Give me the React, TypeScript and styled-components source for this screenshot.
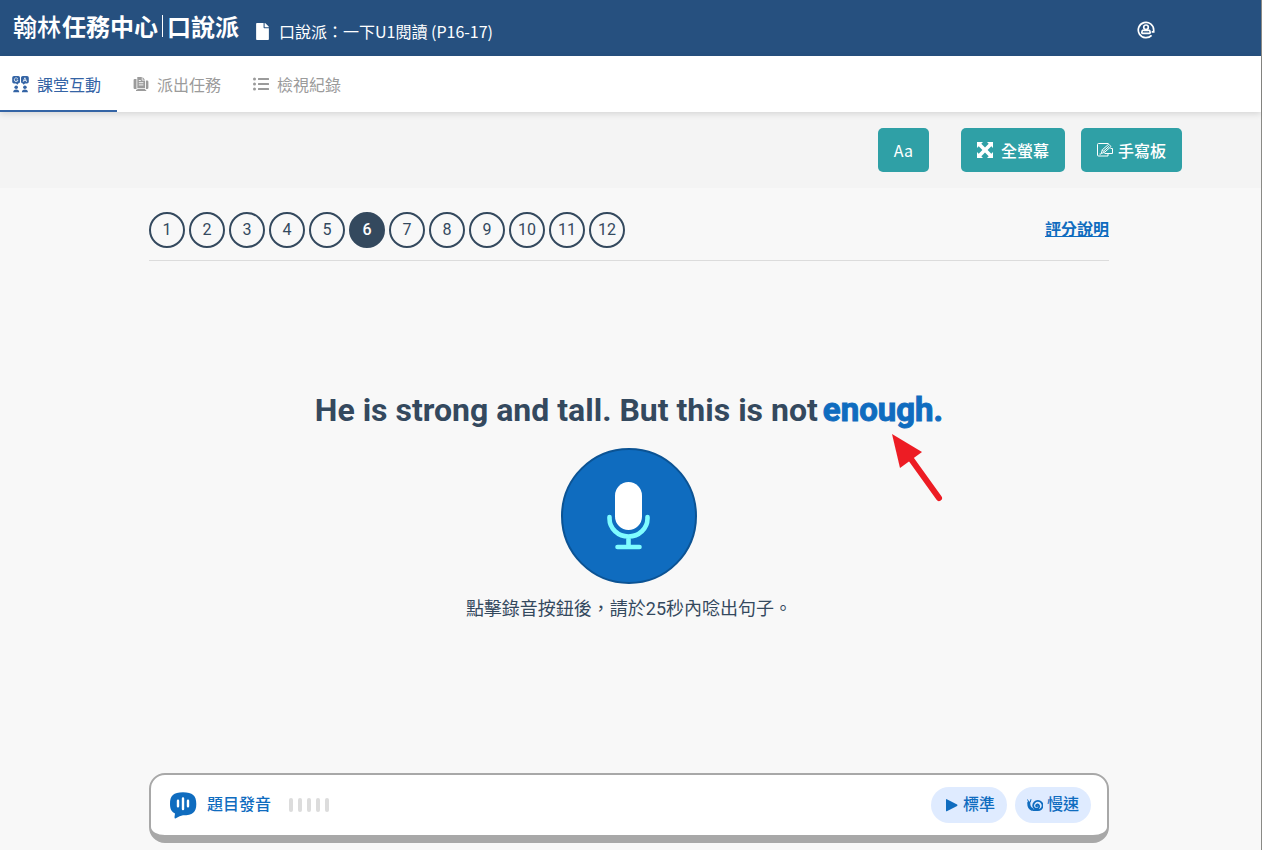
import React, { useState } from "react";
import styled, { createGlobalStyle } from "styled-components";
import { FaFile, FaListUl } from "react-icons/fa";

const sans = `Roboto, "Noto Sans CJK TC", sans-serif`;
const cjk = `"Noto Sans CJK TC", "Noto Sans", sans-serif`;

const GlobalStyle = createGlobalStyle`
  *, *::before, *::after { box-sizing: border-box; }
  body { margin: 0; background: #f8f8f8; font-family: ${sans}; color: #34495e; }
  button { font: inherit; color: inherit; border: 0; padding: 0; margin: 0; background: none; cursor: pointer; }
  a { color: inherit; }
  svg { display: block; flex: none; }
`;

const Page = styled.div`
  min-height: 100vh;
  display: flex;
  flex-direction: column;
  border-right: 1px solid #8a8a86;
`;

const Header = styled.header`
  display: flex;
  align-items: center;
  height: 56px;
  padding: 0 106px 0 13px;
  background: #26507f;
  color: #fff;
  font-family: ${cjk};
`;

const Brand = styled.a`
  display: flex;
  align-items: center;
  padding-bottom: 4px;
  font-size: 24px;
  line-height: 32px;
  font-weight: 700;
  text-decoration: none;
  white-space: nowrap;
`;

const BrandMark = styled.span`
  font-weight: 500;
  padding-right: 1px;
`;

const BrandRule = styled.span`
  width: 1px;
  height: 22px;
  margin: 0 4px;
  background: #fff;
`;

const LessonTitle = styled.h1`
  display: flex;
  align-items: center;
  gap: 8px;
  margin: 0 auto 0 15px;
  padding-top: 6px;
  font-size: 16px;
  line-height: 24px;
  font-weight: 400;
  white-space: nowrap;
`;

const AccountButton = styled.button`
  padding-top: 4px;
`;

const Tabs = styled.nav`
  display: flex;
  height: 56px;
  background: #fff;
  box-shadow: 0 2px 6px rgba(0, 0, 0, 0.12);
  z-index: 1;
`;

const Tab = styled.a<{ $active?: boolean }>`
  display: flex;
  align-items: center;
  gap: 8px;
  padding: 2px 16px 0 12px;
  margin-right: 4px;
  border-bottom: 2px solid ${(p) => (p.$active ? "#3464a5" : "transparent")};
  color: ${(p) => (p.$active ? "#3464a5" : "#9b9b9b")};
  font-family: ${cjk};
  font-size: 16px;
  line-height: 24px;
  text-decoration: none;
`;

const Toolbar = styled.div`
  display: flex;
  justify-content: flex-end;
  gap: 16px;
  padding: 16px 79px 16px 16px;
  background: #f4f4f4;
`;

const ToolButton = styled.button<{ $apart?: boolean; $tight?: boolean }>`
  display: flex;
  align-items: center;
  gap: ${(p) => (p.$tight ? "4px" : "8px")};
  height: 44px;
  padding: 0 16px;
  margin-right: ${(p) => (p.$apart ? "16px" : "0")};
  border-radius: 5px;
  background: #2fa0a6;
  color: #fff;
  font-family: ${cjk};
  font-size: 16px;
  font-weight: ${(p) => (p.$apart ? 400 : 500)};
  line-height: 24px;
`;

const Main = styled.main`
  flex: 1;
  display: flex;
  flex-direction: column;
  width: 100%;
  max-width: 995px;
  margin: 0 auto;
  padding: 24px 19px 7px 16px;
`;

const QuestionBar = styled.div`
  display: flex;
  align-items: center;
  justify-content: space-between;
  padding-bottom: 12px;
  border-bottom: 1px solid #dcdcdc;
`;

const QuestionList = styled.div`
  display: flex;
  gap: 4px;
`;

const QuestionButton = styled.button<{ $active: boolean }>`
  width: 36px;
  height: 36px;
  border: 2px solid #34495e;
  border-radius: 50%;
  background: ${(p) => (p.$active ? "#34495e" : "transparent")};
  color: ${(p) => (p.$active ? "#fff" : "#34495e")};
  font-size: 16px;
  line-height: 32px;
  font-weight: ${(p) => (p.$active ? 500 : 400)};
`;

const ScoreLink = styled.a`
  color: #0f6cbf;
  font-size: 16px;
  line-height: 24px;
  font-weight: 700;
`;

const Practice = styled.section`
  flex: 1;
  display: flex;
  flex-direction: column;
  align-items: center;
  justify-content: center;
  padding-bottom: 26px;
`;

const Sentence = styled.p`
  margin: 0;
  font-size: 32px;
  line-height: 48px;
  font-weight: 700;
  white-space: nowrap;
`;

const Emphasis = styled.span`
  position: relative;
  margin-left: 5px;
  color: #0f6cbf;
  font-size: 33px;
  -webkit-text-stroke: 1px #0f6cbf;
`;

const Pointer = styled.svg`
  position: absolute;
  right: 0;
  top: 43px;
`;

const RecordButton = styled.button`
  display: grid;
  place-items: center;
  width: 136px;
  height: 136px;
  margin: 14px 0 11px;
  border: 2px solid #0b5394;
  border-radius: 50%;
  background: #0f6cbf;
`;

const Hint = styled.p`
  margin: 0;
  font-size: 18px;
  line-height: 28px;
`;

const Player = styled.section`
  display: flex;
  align-items: center;
  height: 70px;
  padding: 0 16px 0 18px;
  border: 2px solid #a8a8a8;
  border-bottom-width: 8px;
  border-radius: 16px;
  background: #fff;
  color: #0f6cbf;
  font-size: 16px;
  line-height: 24px;
`;

const PlayerTitle = styled.span`
  margin: 0 18px 0 10px;
  font-weight: 500;
`;

const Level = styled.div`
  display: flex;
  gap: 5px;
  margin-right: auto;
`;

const LevelBar = styled.span`
  width: 4px;
  height: 14px;
  border-radius: 2px;
  background: #dcdcdc;
`;

const SpeedButton = styled.button`
  display: flex;
  align-items: center;
  gap: 4px;
  height: 36px;
  margin-left: 8px;
  padding: 0 12px;
  border-radius: 18px;
  background: #dfebff;
  font-weight: 500;
`;

function AccountIcon() {
  return (
    <svg width="18" height="18" viewBox="0 0 18 18" fill="none" stroke="#fff" strokeWidth="1.7">
      <path d="M14.600 14.300A7.700 7.700 0 1 1 16.700 9v1.800h-2" />
      <circle cx="9" cy="6.300" r="2.300" />
      <path d="M6.600 8.700C5.200 9.200 4.800 10 4.800 11.500q0 .8.800.8h6.800q.8 0 .8-.8c0-1.500-.4-2.300-1.800-2.800M6.500 9.500h5" />
    </svg>
  );
}

function QaIcon() {
  return (
    <svg width="17" height="18" viewBox="0 0 17 18" fill="currentColor">
      <path d="M2 1h4.200Q8 1 8 2.800v3.900Q8 8.500 6.200 8.500L5.400 9.800 4 8.500H2Q.2 8.500.2 6.700V2.800Q.2 1 2 1zM10.800 1H15q1.800 0 1.800 1.800v3.900q0 1.800-1.800 1.800h-2l-1.400 1.300-.8-1.300Q9 8.500 9 6.700V2.800Q9 1 10.800 1z" />
      <path d="M5.800 3.600Q4.700 2.600 3.400 3q-1.200.5-1.100 1.900.2 1.700 1.900 1.700 1.500 0 1.700-1.500H4.500M11.100 6.900l1.800-4.200 1.800 4.200M11.800 5.600H14" fill="none" stroke="#fff" strokeWidth=".8" />
      <circle cx="4.200" cy="12.300" r="1.800" />
      <circle cx="12.900" cy="12.300" r="1.800" />
      <path d="M1.200 17.200q0-2.600 3-2.600t3 2.600zM9.900 17.200q0-2.600 3-2.600t3 2.600z" />
    </svg>
  );
}

function AssignIcon() {
  return (
    <svg width="16" height="16" viewBox="0 0 16 16" fill="currentColor">
      <path d="M1.700 3H3.500v10H1.700Q.6 13 .6 11.900V4.100Q.6 3 1.700 3zM12.900 4.500h1.200q1.300 0 1.300 1.200v6.100q0 1.200-1.300 1.200h-1.200z" />
      <path d="M4.300 1h4.500v3.500H12V12H4.300zM9.500 1L12 3.800H9.500zM4.300 12.700H12v1.100h1.200V15H3v-1.200h1.300z" />
      <path d="M5.800 4.500h2M5.800 6.700h4.600M5.800 8.900h4.600" stroke="#fff" strokeWidth=".9" />
    </svg>
  );
}

function ExpandIcon() {
  return (
    <svg width="16" height="16" viewBox="0 0 16 16" fill="#fff">
      <path d="M0 0h6L4.300 1.700 8 5.400l3.700-3.700L10 0h6v6l-1.700-1.700L10.600 8l3.700 3.700L16 10v6h-6l1.700-1.700L8 10.600l-3.700 3.700L6 16H0v-6l1.700 1.700L5.400 8 1.700 4.300 0 6z" />
    </svg>
  );
}

function TabletIcon() {
  return (
    <svg width="17" height="16" viewBox="0 0 17 16" fill="none" stroke="#fff" strokeWidth="1" strokeLinejoin="round">
      <path d="M11.500 1.500h-10Q.5 1.500.5 2.500v10.500Q.5 14 1.500 14H11v-2.500M2.500 12h1.500M13.500 6.500H15.500v5H7.500" />
      <path d="M4.300 11.500l1-3.700 6.400-5.600 2.300 2.300-6.400 5.800zM5.300 7.800l2.300 2.500M7 8.700l5-4.400" />
    </svg>
  );
}

function MicIcon() {
  return (
    <svg width="44" height="70" viewBox="0 0 44 70">
      <rect x="8" y="1" width="27" height="48" rx="13.500" fill="#fff" />
      <path d="M2.500 36v1.500a19 18 0 0 0 38 0V36M21.500 56v10M10.500 66h22" fill="none" stroke="#7ffcff" strokeWidth="4.600" strokeLinecap="round" />
    </svg>
  );
}

function VoiceIcon() {
  return (
    <svg width="28" height="28" viewBox="0 0 28 28">
      <path d="M14 1.200C23.500 1.200 27.300 4.500 27.300 13S23.500 24.300 14 24.300q-3 .3-7.600 3.200Q5.400 27.600 5.500 26L6 22.500C2.500 20.800 1 18 1 13 1 4.500 4.500 1.200 14 1.200z" fill="#0f6cbf" />
      <path d="M9 9.800v5.500M14 7.500v10.500M19 9.800v5.500" stroke="#fff" strokeWidth="2.400" strokeLinecap="round" />
    </svg>
  );
}

function PlayIcon() {
  return (
    <svg width="16" height="16" viewBox="0 0 16 16">
      <path d="M3 2.600v11.200q0 .8.800.4l10.300-5.300q.8-.6 0-1.300L3.800 2.200Q3 1.800 3 2.600z" fill="#0f6cbf" />
    </svg>
  );
}

function SnailIcon() {
  return (
    <svg width="16" height="16" viewBox="0 0 16 16" fill="none" stroke="#0f6cbf" strokeLinecap="round">
      <path d="M.6 2.800l1.200 2M3.900 2.600L3.300 5" strokeWidth="1" />
      <path d="M1.800 5.700c-.2 3.500.6 5.600 3.200 6.600" strokeWidth="3" />
      <path d="M6.500 13.200h4a4.700 4.700 0 1 0-4.300-4.500c0 2.900 3.400 4 5 2.700 1.900-1.700.6-4.400-1.300-3.800-1.200.4-1 1.900.1 1.900" strokeWidth="1.800" />
    </svg>
  );
}

export default function App() {
  const [question, setQuestion] = useState(6);
  return (
    <Page>
      <GlobalStyle />
      <Header>
        <Brand href="#home">
          <BrandMark>翰林</BrandMark>
          任務中心
          <BrandRule />
          口說派
        </Brand>
        <LessonTitle>
          <FaFile size={17} />
          口說派：一下U1閱讀 (P16-17)
        </LessonTitle>
        <AccountButton aria-label="帳號">
          <AccountIcon />
        </AccountButton>
      </Header>
      <Tabs>
        <Tab href="#class" $active>
          <QaIcon />
          課堂互動
        </Tab>
        <Tab href="#assign">
          <AssignIcon />
          派出任務
        </Tab>
        <Tab href="#records">
          <FaListUl size={16} />
          檢視紀錄
        </Tab>
      </Tabs>
      <Toolbar>
        <ToolButton $apart>Aa</ToolButton>
        <ToolButton>
          <ExpandIcon />
          全螢幕
        </ToolButton>
        <ToolButton $tight>
          <TabletIcon />
          手寫板
        </ToolButton>
      </Toolbar>
      <Main>
        <QuestionBar>
          <QuestionList>
            {Array.from({ length: 12 }, (_, i) => i + 1).map((n) => (
              <QuestionButton key={n} $active={n === question} onClick={() => setQuestion(n)}>
                {n}
              </QuestionButton>
            ))}
          </QuestionList>
          <ScoreLink href="#score">評分說明</ScoreLink>
        </QuestionBar>
        <Practice>
          <Sentence>
            He is strong and tall. But this is not
            <Emphasis>
              enough.
              <Pointer width="52" height="70" viewBox="0 0 52 70">
                <path d="M20 26L48 65" stroke="#ed1c24" strokeWidth="6" strokeLinecap="round" />
                <path d="M1 1L31 19L9 35z" fill="#ed1c24" />
              </Pointer>
            </Emphasis>
          </Sentence>
          <RecordButton aria-label="錄音">
            <MicIcon />
          </RecordButton>
          <Hint>點擊錄音按鈕後，請於25秒內唸出句子。</Hint>
        </Practice>
        <Player>
          <VoiceIcon />
          <PlayerTitle>題目發音</PlayerTitle>
          <Level>
            {[0, 1, 2, 3, 4].map((n) => (
              <LevelBar key={n} />
            ))}
          </Level>
          <SpeedButton>
            <PlayIcon />
            標準
          </SpeedButton>
          <SpeedButton>
            <SnailIcon />
            慢速
          </SpeedButton>
        </Player>
      </Main>
    </Page>
  );
}
